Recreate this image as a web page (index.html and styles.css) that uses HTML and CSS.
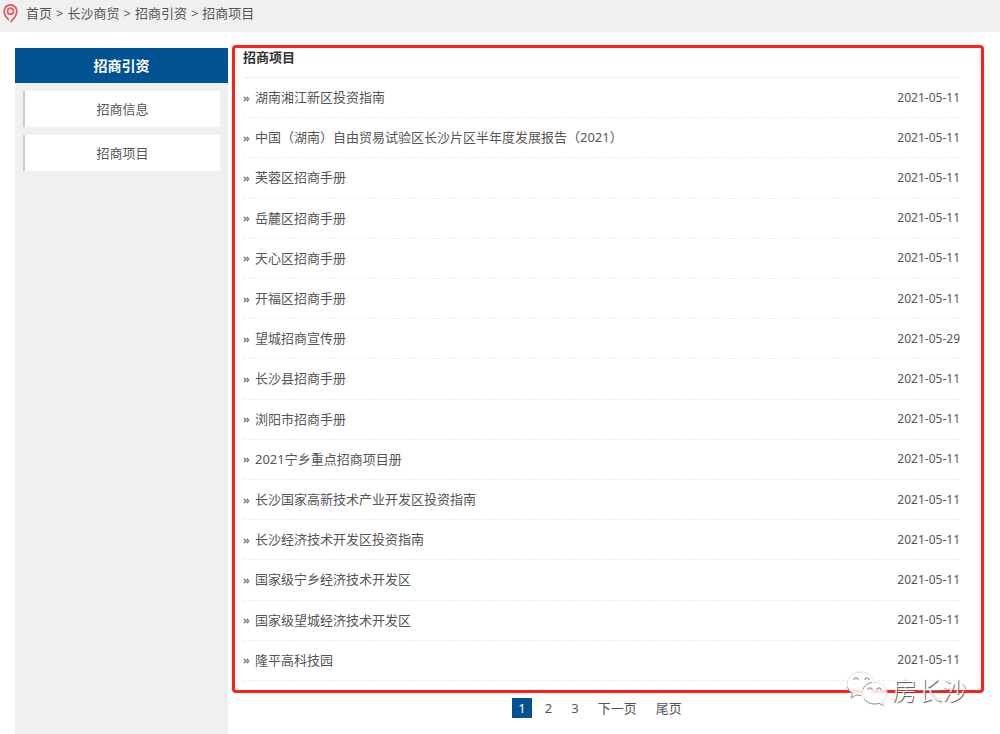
FILE: index.html
```html
<!DOCTYPE html>
<html lang="zh-CN">
<head>
<meta charset="utf-8">
<meta name="viewport" content="width=device-width, initial-scale=1">
<title>招商项目</title>
<link rel="stylesheet" href="styles.css">
</head>
<body>
<nav class="breadcrumb" aria-label="breadcrumb">
  <svg class="pin" viewBox="0 0 16 20" aria-hidden="true"><path d="M6.3 17.2C4 14.6 1.2 11.2 1.2 7.6a6.8 6.8 0 0 1 13.6 0c0 4.1-3.4 8.1-6.7 11.5"/><circle cx="8" cy="7.6" r="3.2"/></svg>
  <a href="#">首页</a><span>&gt;</span><a href="#">长沙商贸</a><span>&gt;</span><a href="#">招商引资</a><span>&gt;</span><a href="#">招商项目</a>
</nav>
<div class="layout">
  <aside class="sidebar">
    <h2 class="sidebar-title">招商引资</h2>
    <ul class="menu">
      <li><a href="#">招商信息</a></li>
      <li><a href="#">招商项目</a></li>
    </ul>
  </aside>
  <main class="content">
    <section class="panel">
      <h1 class="panel-title">招商项目</h1>
      <ul class="list">
        <li><a href="#">湖南湘江新区投资指南</a><time>2021-05-11</time></li>
        <li><a href="#">中国（湖南）自由贸易试验区长沙片区半年度发展报告（2021）</a><time>2021-05-11</time></li>
        <li><a href="#">芙蓉区招商手册</a><time>2021-05-11</time></li>
        <li><a href="#">岳麓区招商手册</a><time>2021-05-11</time></li>
        <li><a href="#">天心区招商手册</a><time>2021-05-11</time></li>
        <li><a href="#">开福区招商手册</a><time>2021-05-11</time></li>
        <li><a href="#">望城招商宣传册</a><time>2021-05-29</time></li>
        <li><a href="#">长沙县招商手册</a><time>2021-05-11</time></li>
        <li><a href="#">浏阳市招商手册</a><time>2021-05-11</time></li>
        <li><a href="#">2021宁乡重点招商项目册</a><time>2021-05-11</time></li>
        <li><a href="#">长沙国家高新技术产业开发区投资指南</a><time>2021-05-11</time></li>
        <li><a href="#">长沙经济技术开发区投资指南</a><time>2021-05-11</time></li>
        <li><a href="#">国家级宁乡经济技术开发区</a><time>2021-05-11</time></li>
        <li><a href="#">国家级望城经济技术开发区</a><time>2021-05-11</time></li>
        <li><a href="#">隆平高科技园</a><time>2021-05-11</time></li>
      </ul>
    </section>
    <nav class="pager" aria-label="pagination">
      <a class="current" href="#" aria-current="page">1</a>
      <a href="#">2</a>
      <a href="#">3</a>
      <a href="#">下一页</a>
      <a href="#">尾页</a>
    </nav>
    <div class="watermark">
      <svg class="wechat" viewBox="0 0 42 36" aria-hidden="true">
        <path class="bubble" d="M15 1C7.300 1 1 6.300 1 13c0 4 2.200 7.300 5.600 9.500L5 27l5.500-3c1.500.4 3 .6 4.500.6 7.700 0 14-5 14-11.600S22.700 1 15 1z"/>
        <path class="shade" d="M1.500 16c1 3 2.600 5 5.100 6.500L5 27l5.500-3 4.500.6"/>
        <path class="bubble" d="M28.500 11.500C21.600 11.500 16 16.300 16 22.300S21.600 33 28.500 33c1.600 0 3.100-.2 4.500-.7l4.500 2.400-1.200-4C39.200 28.700 41 25.700 41 22.300c0-6-5.600-10.800-12.500-10.800z"/>
        <path class="shade" d="M18 28c2.500 3.300 6.200 5 10.500 5 1.600 0 3.100-.2 4.500-.7l4.500 2.400M17 18c1.500-3.500 5-6 9-6.400"/>
        <path class="eyes" d="M8 9a2 2 0 0 1 4 0M19 9a2 2 0 0 1 4 0M22 19a2 2 0 0 1 4 0M31 19a2 2 0 0 1 4 0"/>
      </svg>
      <span>房长沙</span>
    </div>
  </main>
</div>
</body>
</html>
```

FILE: styles.css
```css
* {
  box-sizing: border-box;
}

body {
  margin: 0;
  min-height: 100vh;
  display: flex;
  flex-direction: column;
  background: #fff;
  color: #555;
  font: 13px/20px "Noto Sans", "Noto Sans CJK SC", sans-serif;
}

a {
  color: inherit;
  text-decoration: none;
}

ul {
  list-style: none;
  margin: 0;
  padding: 0;
}

.breadcrumb {
  display: flex;
  align-items: center;
  gap: 4px;
  padding: 0 3px 6px;
  height: 32px;
  background: #f0f0f0;
}

.pin {
  width: 15px;
  height: 19px;
  margin-right: 4px;
  fill: none;
  stroke: #d9626c;
  stroke-width: 2;
}

.layout {
  flex: 1;
  display: flex;
  gap: 4px;
  padding: 13px 16px 0 15px;
}

.sidebar {
  flex: 0 0 213px;
  margin-top: 3px;
  background: #f0f0f0;
}

.sidebar-title {
  margin: 0;
  background: #005293;
  color: #fff;
  font-size: 14px;
  line-height: 35px;
  text-align: center;
}

.menu {
  display: grid;
  gap: 8px;
  padding: 8px;
}

.menu a {
  display: block;
  border-left: 2px solid #ccc;
  background: #fff;
  line-height: 36px;
  text-align: center;
}

.content {
  position: relative;
  flex: 1;
  display: flex;
  flex-direction: column;
}

.panel {
  flex: 1;
  display: flex;
  flex-direction: column;
  padding: 0 21px 9px 8px;
  border: 3px solid #ff2116;
  border-radius: 4px;
}

.panel-title {
  margin: 0;
  padding-bottom: 10px;
  border-bottom: 1px solid #eee;
  color: #333;
  font-size: 13px;
  line-height: 19px;
}

.list {
  flex: 1;
  display: grid;
  grid-auto-rows: minmax(40px, 1fr);
}

.list li {
  display: flex;
  align-items: center;
  border-bottom: 1px dashed #f0f0f0;
}

.list a {
  padding-bottom: 1px;
}

.list li::before {
  content: "»";
  width: 12px;
  color: #777;
  font-size: 11px;
  font-weight: 700;
}

.list time {
  margin-left: auto;
  font-size: 12px;
}

.pager {
  display: flex;
  justify-content: center;
  gap: 7px;
  padding: 5px 25px 16px 9px;
}

.pager a {
  padding: 0 6px;
}

.pager .current {
  background: #005293;
  color: #fff;
}

.watermark {
  position: absolute;
  right: 17px;
  bottom: 27px;
  display: flex;
  align-items: center;
  gap: 4px;
  color: #fff;
  font-family: "Noto Sans CJK SC", sans-serif;
  font-size: 25px;
  font-weight: 300;
  line-height: 36px;
  text-shadow: 1px 1px 1px #444;
}

.wechat {
  width: 42px;
  height: 36px;
}

.bubble {
  fill: #fff;
  fill-opacity: 0.85;
  stroke: #ddd;
}

.shade {
  fill: none;
  stroke: #999;
}

.eyes {
  fill: none;
  stroke: #aaa;
  stroke-width: 1.5;
}
```
